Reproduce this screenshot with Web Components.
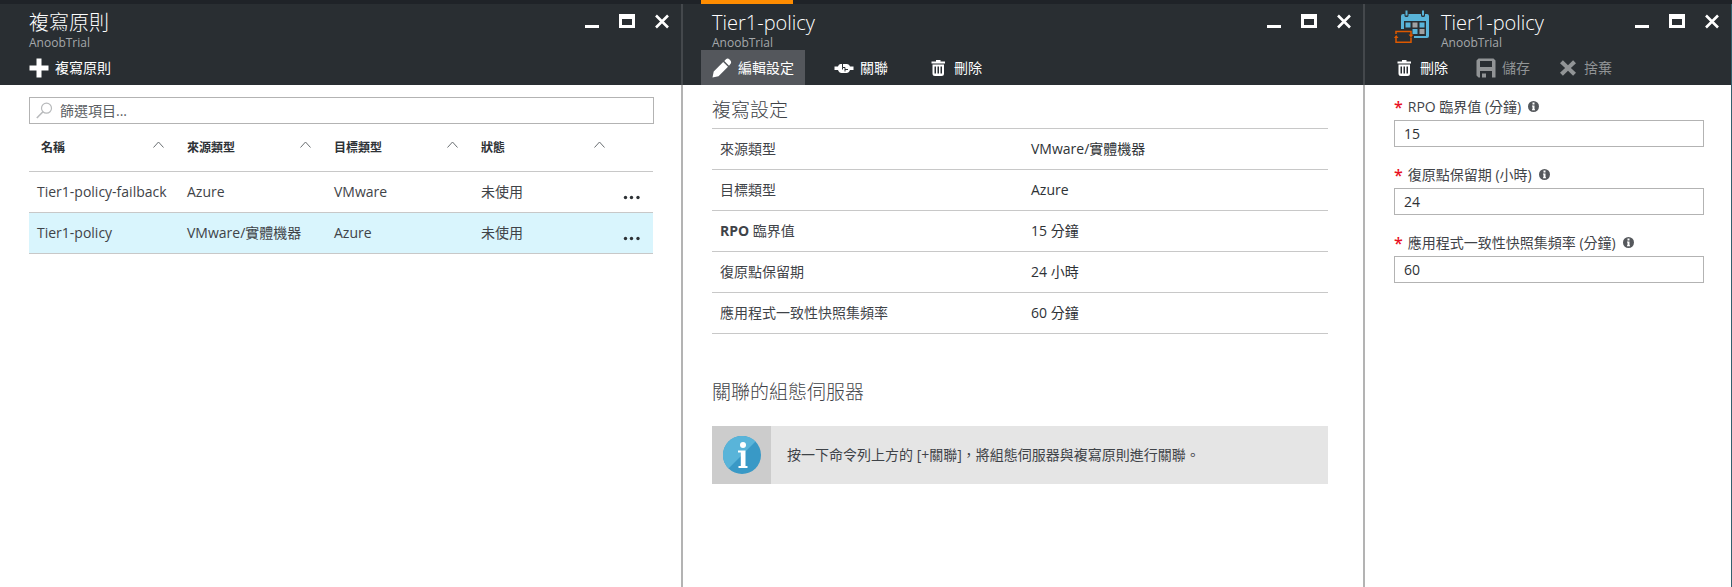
<!DOCTYPE html>
<html lang="zh-Hant">
<head>
<meta charset="utf-8">
<title>複寫原則</title>
<style>
  html, body { margin: 0; }
  body {
    font: 14px/20px "Open Sans", "Noto Sans CJK TC", sans-serif;
    color: #3f4348;
    background: #fff;
  }
</style>
</head>
<body>
<portal-app></portal-app>

<template id="t-app">
  <style>
    :host { display: flex; flex-direction: column; min-height: 100vh; }
    .progress, main { display: grid; grid-template-columns: 683fr 682fr 367fr; }
    .progress { height: 4px; background: #1f2328; }
    .progress span { grid-column: 2; width: 92px; margin-left: 18px; background: #ff8c00; }
    main { flex: 1; }
    portal-blade:last-child { --gap: 6px; --edge: 1px; --edge-body: #33606e; --edge-head: #33606e; }
  </style>
  <div class="progress"><span></span></div>
  <main>
    <portal-blade heading="複寫原則" subtitle="AnoobTrial">
      <blade-command slot="commands" icon="plus">複寫原則</blade-command>
      <policy-list></policy-list>
    </portal-blade>
    <portal-blade heading="Tier1-policy" subtitle="AnoobTrial">
      <blade-command slot="commands" icon="pencil" active>編輯設定</blade-command>
      <blade-command slot="commands" icon="link">關聯</blade-command>
      <blade-command slot="commands" icon="trash">刪除</blade-command>
      <policy-details></policy-details>
    </portal-blade>
    <portal-blade heading="Tier1-policy" subtitle="AnoobTrial">
      <svg slot="icon" width="36" height="34" viewBox="0 0 36 34" aria-hidden="true">
        <path fill="#59b4d9" d="M11.500 0.500h2v5h-2zM28 0.500h2v5h-2z"/>
        <path fill="#59b4d9" d="M7 6q0-2 2-2h1.500v1.500q0 1.500 2 1.500t2-1.500V4h12.500v1.500q0 1.500 2 1.500t2-1.500V4H33q2 0 2 2v20q0 2-2 2H20v-2h12V11H10v8H7z"/>
        <path fill="#59b4d9" d="M11.500 12.500h5v5h-5zM25.500 12.500h5v5h-5zM18.500 19h5v5h-5z"/>
        <path fill="#a0a1a2" d="M18.500 12.500h5v5h-5zM25.500 19h5v5h-5z"/>
        <path fill="none" stroke="#dd5900" stroke-width="1.500" d="M5 21.500H2V24M5 21.500h12V25M2 27v5.300h15V27.500"/>
        <path fill="#dd5900" d="M14.500 24.500h5l-2.500 3zM0 28h4.500l-2.300-3z"/>
      </svg>
      <blade-command slot="commands" icon="trash">刪除</blade-command>
      <blade-command slot="commands" icon="save" disabled>儲存</blade-command>
      <blade-command slot="commands" icon="discard" disabled>捨棄</blade-command>
      <policy-form></policy-form>
    </portal-blade>
  </main>
</template>

<template id="t-blade">
  <style>
    :host {
      display: flex; flex-direction: column; min-width: 0;
      border-right: var(--edge, 2px) solid var(--edge-body, #b3b3b3);
    }
    header {
      display: grid; grid-template-rows: 46px 35px; background: #292e32; color: #fff;
      margin-right: calc(0px - var(--edge, 2px));
      border-right: var(--edge, 2px) solid var(--edge-head, #44484c);
    }
    .top { display: flex; padding: 0 11px 0 29px; }
    ::slotted(svg) { margin: 6px 11px 0 0; }
    .titles { flex: 1; padding-top: 5px; }
    h1 { margin: 0; font-size: 20px; line-height: 27px; font-weight: 300; }
    p { margin: 0; font-size: 12px; line-height: 14px; color: #a5a8ab; }
    .window { display: flex; gap: 19px; padding-top: 9px; align-self: flex-start; }
    .window button { padding: 0; border: 0; background: none; color: #fff; width: 16px; height: 16px; }
    .window svg { display: block; }
    .commands { display: flex; gap: var(--gap, 18px); padding: 0 18px; }
  </style>
  <header>
    <div class="top">
      <slot name="icon"></slot>
      <div class="titles"><h1></h1><p></p></div>
      <div class="window">
        <button type="button" aria-label="最小化"><svg width="16" height="16"><path fill="currentColor" d="M1 12h14v3H1z"/></svg></button>
        <button type="button" aria-label="最大化"><svg width="16" height="16"><path fill="currentColor" fill-rule="evenodd" d="M0 1h16v14H0zM3 6v6h10V6z"/></svg></button>
        <button type="button" aria-label="關閉"><svg width="16" height="16"><path stroke="currentColor" stroke-width="2.600" d="M2 2.500l12 12M14 2.500l-12 12"/></svg></button>
      </div>
    </div>
    <div class="commands"><slot name="commands"></slot></div>
  </header>
  <slot></slot>
</template>

<template id="t-command">
  <style>
    :host { display: flex; }
    button {
      display: flex; align-items: center; gap: 6px; padding: 0 11px;
      border: 0; background: none; color: #fff; font: inherit; white-space: nowrap;
    }
    :host([active]) button { background: #54575c; }
    button:disabled { color: #919496; }
    svg { flex: none; }
  </style>
  <button type="button"><svg width="20" height="20" viewBox="0 0 20 20" aria-hidden="true"></svg><span><slot></slot></span></button>
</template>

<template id="t-list">
  <style>
    :host { display: block; padding: 12px 27px 0 29px; }
    .search { display: flex; align-items: center; height: 25px; border: 1px solid #b3b3b3; padding: 0 6px; gap: 7px; }
    .search input { flex: 1; min-width: 0; border: 0; padding: 0; outline: 0; background: none; font: inherit; color: inherit; }
    .search input::placeholder { color: #5c6064; opacity: 1; }
    table { width: calc(100% - 1px); border-collapse: collapse; table-layout: fixed; }
    col.menu { width: 36px; }
    tr { border-bottom: 1px solid #c8c8c8; }
    th, td { padding: 0 0 0 11px; text-align: left; white-space: nowrap; }
    th { height: 47px; font-size: 12px; font-weight: 700; color: #2e3236; }
    th:first-child { padding-left: 12px; }
    th button {
      display: flex; width: 100%; justify-content: space-between; align-items: center;
      padding: 0 12px 0 0; border: 0; background: none; font: inherit; color: inherit;
    }
    th svg { margin-bottom: 6px; }
    td { height: 40px; }
    td:first-child { padding-left: 8px; }
    td:last-child { padding: 0; }
    td button { display: block; margin: 10px 0 0 6px; padding: 0; border: 0; background: none; color: #2e3236; height: 10px; }
    td svg { display: block; }
    .selected { background: #d9f5fd; }
  </style>
  <label class="search">
    <svg width="17" height="17" viewBox="0 0 17 17" fill="none" stroke="#b8babc" aria-hidden="true"><circle cx="10.500" cy="6.200" r="5" stroke-width="1.200"/><path stroke-width="1.600" d="M7 9.800L.800 16"/></svg>
    <input type="text" placeholder="篩選項目..." aria-label="篩選項目">
  </label>
  <table>
    <colgroup><col><col><col><col><col class="menu"></colgroup>
    <thead><tr></tr></thead>
    <tbody></tbody>
  </table>
</template>

<template id="t-details">
  <style>
    :host { display: block; padding: 0 35px 0 29px; }
    h2 { margin: 0; font-size: 19px; line-height: 28px; font-weight: 300; }
    h2:first-of-type { padding: 11px 0 4px; }
    h2:last-of-type { padding: 44px 0 20px; }
    table { width: 100%; border-collapse: collapse; table-layout: fixed; border-top: 1px solid #c8c8c8; }
    col:first-child { width: 311px; }
    tr { border-bottom: 1px solid #c8c8c8; }
    th, td { height: 40px; padding: 0 0 0 8px; text-align: left; font-weight: 400; }
    td { color: #2e3236; }
    .notice { display: grid; grid-template-columns: 59px 1fr; min-height: 58px; background: #e5e5e5; align-items: center; }
    .badge { display: grid; place-items: center; height: 100%; background: #ccc; }
    .notice p { margin: 0 16px; }
  </style>
  <h2>複寫設定</h2>
  <table><colgroup><col><col></colgroup><tbody></tbody></table>
  <h2>關聯的組態伺服器</h2>
  <div class="notice">
    <div class="badge">
      <svg width="38" height="38" viewBox="0 0 38 38" aria-hidden="true">
        <circle cx="19" cy="19" r="19" fill="#3999c6"/>
        <path fill="#59b4d9" d="M5.500 32.500A19 19 0 0 1 32.500 5.500z"/>
        <circle cx="20" cy="9" r="3" fill="#fff"/>
        <path fill="#fff" d="M15 14.500h7.500V30h2v2h-9v-2h2.300V16.500H15z"/>
      </svg>
    </div>
    <p>按一下命令列上方的 [+關聯]，將組態伺服器與複寫原則進行關聯。</p>
  </div>
</template>

<template id="t-form">
  <style>
    form { display: grid; gap: 14px; padding: 8px 27px 0 29px; }
  </style>
  <form>
    <form-field label="RPO 臨界值 (分鐘)" value="15"></form-field>
    <form-field label="復原點保留期 (小時)" value="24"></form-field>
    <form-field label="應用程式一致性快照集頻率 (分鐘)" value="60"></form-field>
  </form>
</template>

<template id="t-field">
  <style>
    :host { display: grid; grid-template-rows: 27px 27px; }
    .row { display: flex; align-items: center; gap: 7px; }
    label { display: flex; gap: 5px; white-space: nowrap; }
    .star { color: #e81123; font-size: 16px; font-weight: 600; }
    input { box-sizing: border-box; width: 100%; min-width: 0; border: 1px solid #b3b3b3; padding: 0 9px; background: #fff; color: #2e3236; font: inherit; }
  </style>
  <div class="row">
    <label for="value"><span class="star">*</span><span class="text"></span></label>
    <svg width="11" height="11" viewBox="0 0 11 11" role="img" aria-label="資訊"><circle cx="5.500" cy="5.500" r="5.500" fill="#55585c"/><path fill="#fff" d="M4.500 1.500h2v2h-2zM4 4.500h2.500v3.700H7v1H4v-1h.500V5.500H4z"/></svg>
  </div>
  <input id="value" type="text" required>
</template>

<script>
  class TemplateElement extends HTMLElement {
    constructor() {
      super();
      const template = document.getElementById(this.constructor.template);
      this.attachShadow({ mode: 'open' }).append(template.content.cloneNode(true));
    }
    $(selector) { return this.shadowRoot.querySelector(selector); }
  }

  const ICONS = {
    plus: '<path d="M7.500 0.500h5v7h7v5h-7v7h-5v-7h-7v-5h7z"/>',
    pencil: '<path d="M0.500 19.500l1.200-6L11.200 4l4.800 4.800L6.500 18.300zM12.300 2.900l1.900-1.900q1.600-1.200 3.600.700t1 3.700l-1.800 2.300z"/>',
    link: '<path d="M.500 8.500H4q.500-2.500 2.500-2.500H13q2.500 0 3 2.500h3.500v3.500H16q-1 3-3.500 3H7.500Q5 15 4 12H.500z"/><path d="M8.500 6v3.500h2.500v4M8.500 11.500v-2M14 11.500h-3" fill="none" stroke="#292e32" stroke-width="1"/>',
    trash: '<path fill-rule="evenodd" d="M3.500 3.500h4.500v-1.500h4.500v1.500h4.500v2h-13.500zM4.500 6.500h11.500v9q0 2.500-2.500 2.500H7q-2.500 0-2.500-2.500zM6.500 8.500v7H8v-7zM9.500 8.500v7H11v-7zM12.500 8.500v7H14v-7z"/>',
    save: '<path fill-rule="evenodd" d="M2.500 0.500h15l2 2V19.500H16V13H4v6.500H2.500l-2-2v-15zM4 3v6h12V3zM6 15.500h4v4H6z"/>',
    discard: '<path d="M2 5.200L4.900 2.300 10 7.200l5.100-4.900L18 5.200 12.900 10l5.100 4.800-2.900 2.900L10 12.800l-5.100 4.900L2 14.800 7.100 10z"/>'
  };

  customElements.define('blade-command', class extends TemplateElement {
    static template = 't-command';
    connectedCallback() {
      const svg = this.$('svg');
      svg.setAttribute('fill', 'currentColor');
      svg.innerHTML = ICONS[this.getAttribute('icon')];
      this.$('button').disabled = this.hasAttribute('disabled');
    }
  });

  customElements.define('portal-blade', class extends TemplateElement {
    static template = 't-blade';
    connectedCallback() {
      this.$('h1').textContent = this.getAttribute('heading');
      this.$('p').textContent = this.getAttribute('subtitle');
    }
  });

  customElements.define('policy-list', class extends TemplateElement {
    static template = 't-list';
    connectedCallback() {
      const chevron = '<svg width="11" height="7" fill="none" stroke="#6a6e72" aria-hidden="true"><path d="M.500 6.500l5-5.500 5 5.500"/></svg>';
      const dots = '<svg width="18" height="10" fill="currentColor" aria-hidden="true"><circle cx="2.500" cy="5.500" r="1.700"/><circle cx="8.500" cy="5.500" r="1.700"/><circle cx="15" cy="5.500" r="1.700"/></svg>';
      this.$('thead tr').innerHTML = ['名稱', '來源類型', '目標類型', '狀態']
        .map(t => `<th scope="col"><button type="button">${t}${chevron}</button></th>`).join('') + '<td></td>';
      this.$('tbody').innerHTML = [
        ['Tier1-policy-failback', 'Azure', 'VMware', '未使用'],
        ['Tier1-policy', 'VMware/實體機器', 'Azure', '未使用']
      ].map((row, i) => `<tr${i === 1 ? ' class="selected"' : ''}>${row.map(c => `<td>${c}</td>`).join('')}` +
        `<td><button type="button" aria-label="更多">${dots}</button></td></tr>`).join('');
    }
  });

  customElements.define('policy-details', class extends TemplateElement {
    static template = 't-details';
    connectedCallback() {
      this.$('tbody').innerHTML = [
        ['來源類型', 'VMware/實體機器'],
        ['目標類型', 'Azure'],
        ['<b>RPO</b> 臨界值', '15 分鐘'],
        ['復原點保留期', '24 小時'],
        ['應用程式一致性快照集頻率', '60 分鐘']
      ].map(([k, v]) => `<tr><th scope="row">${k}</th><td>${v}</td></tr>`).join('');
    }
  });

  customElements.define('form-field', class extends TemplateElement {
    static template = 't-field';
    connectedCallback() {
      this.$('.text').textContent = this.getAttribute('label');
      this.$('input').value = this.getAttribute('value');
    }
  });

  customElements.define('policy-form', class extends TemplateElement { static template = 't-form'; });
  customElements.define('portal-app', class extends TemplateElement { static template = 't-app'; });
</script>
</body>
</html>
